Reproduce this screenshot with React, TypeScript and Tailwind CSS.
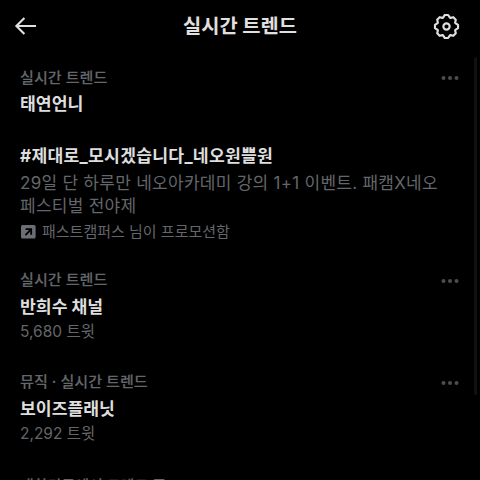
import React from 'react';

const font = "font-['Inter','Noto_Sans_CJK_KR',sans-serif]";

const trends = [
  { label: '실시간 트렌드', title: '반희수 채널', count: '5,680 트윗' },
  { label: '뮤직 · 실시간 트렌드', title: '보이즈플래닛', count: '2,292 트윗' },
];

const Dots = () => (
  <svg className="h-2 w-5 text-[#4b4d50]" viewBox="0 0 20 8" fill="currentColor">
    <circle cx="3.5" cy="4" r="2" />
    <circle cx="10" cy="4" r="2" />
    <circle cx="16.5" cy="4" r="2" />
  </svg>
);

const BackIcon = () => (
  <svg
    className="h-6 w-6"
    viewBox="0 0 24 24"
    fill="none"
    stroke="currentColor"
    strokeWidth="2.1"
  >
    <path d="M11.4 4.1 3.4 12l8 7.9M3.4 12H23" />
  </svg>
);

const GearIcon = () => (
  <svg
    className="h-[27px] w-[27px]"
    viewBox="0 0 24 24"
    fill="none"
    stroke="currentColor"
    strokeWidth="1.9"
    strokeLinejoin="round"
  >
    <path d="M10.54 1.75h2.92l1.57 2.36c.11.17.32.25.53.21l2.53-.59 2.17 2.17-.58 2.54c-.05.2.04.41.21.53l2.36 1.57v2.92l-2.36 1.57c-.17.12-.26.33-.21.53l.58 2.54-2.17 2.17-2.53-.59c-.21-.04-.42.04-.53.21l-1.57 2.36h-2.92l-1.58-2.36c-.11-.17-.32-.25-.52-.21l-2.54.59-2.17-2.17.58-2.54c.05-.2-.03-.41-.21-.53l-2.35-1.57v-2.92l2.35-1.57c.18-.12.26-.33.21-.53L3.73 5.9 5.9 3.73l2.54.59c.2.04.41-.04.52-.21z" />
    <circle cx="12" cy="12" r="2.8" />
  </svg>
);

const PromotedIcon = () => (
  <svg className="h-[14px] w-[16px]" viewBox="0 0 16 14">
    <rect x="1" y="0" width="14.6" height="13.6" rx="1.6" fill="#6b6e72" />
    <path
      d="M5.4 10.2 10.6 4.9M5.6 4.2h5.6v5.6"
      fill="none"
      stroke="#000"
      strokeWidth="1.8"
    />
  </svg>
);

const Label = ({ text }: { text: string }) => (
  <div className="flex h-[26px] items-center justify-between">
    <span className="text-[15.1px] font-medium text-[#63666a] [-webkit-text-stroke:0.15px]">
      {text}
    </span>
    <Dots />
  </div>
);

const Title = ({ text, className = '' }: { text: string; className?: string }) => (
  <h2
    className={`h-[26px] text-[17.2px] leading-[26px] font-bold text-[#dedede] ${className}`}
  >
    {text}
  </h2>
);

export default function App() {
  return (
    <div
      className={`relative flex h-[480px] w-[480px] flex-col overflow-hidden bg-black whitespace-nowrap ${font}`}
    >
      <header className="grid h-[52px] shrink-0 grid-cols-[1fr_auto_1fr] items-center pr-5 pl-[13px] text-[#e0e0e0]">
        <button className="justify-self-start">
          <BackIcon />
        </button>
        <h1 className="pl-[7px] text-[19.8px] leading-6 font-bold">
          실시간 트렌드
        </h1>
        <button className="justify-self-end">
          <GearIcon />
        </button>
      </header>

      <main className="flex flex-col pt-[13px] pr-5 pl-5">
        <section className="h-[78px]">
          <Label text="실시간 트렌드" />
          <Title text="태연언니" />
        </section>

        {/* promoted trend */}
        <section className="h-[124.5px]">
          <Title
            text="#제대로_모시겠습니다_네오원쁠원"
            className="tracking-[0.25px]"
          />
          <p className="pt-[3px] text-[17px] leading-[22.5px] tracking-[0.27px] text-[#63666a]">
            29일 단 하루만 네오아카데미 강의 1+1 이벤트. 패캠X네오
            <br />
            페스티벌 전야제
          </p>
          <div className="mt-[3px] flex h-6 items-center gap-[6px] text-[15px] text-[#63666a]">
            <PromotedIcon />
            <span>패스트캠퍼스 님이 프로모션함</span>
          </div>
        </section>

        {trends.map((trend) => (
          <section key={trend.title} className="h-[102.3px]">
            <Label text={trend.label} />
            <Title text={trend.title} />
            <p className="text-[15.5px] leading-6 text-[#63666a]">
              {trend.count}
            </p>
          </section>
        ))}

        <section className="pt-px">
          <div className="h-[26px] text-[15px] leading-[26px] font-medium text-[#63666a] [-webkit-text-stroke:0.15px]">
            대한민국에서 트렌드 중
          </div>
        </section>
      </main>

      {/* scrollbar */}
      <div className="absolute top-[57px] left-[474px] h-[338px] w-[3px] rounded-full bg-[#111111]" />
    </div>
  );
}
